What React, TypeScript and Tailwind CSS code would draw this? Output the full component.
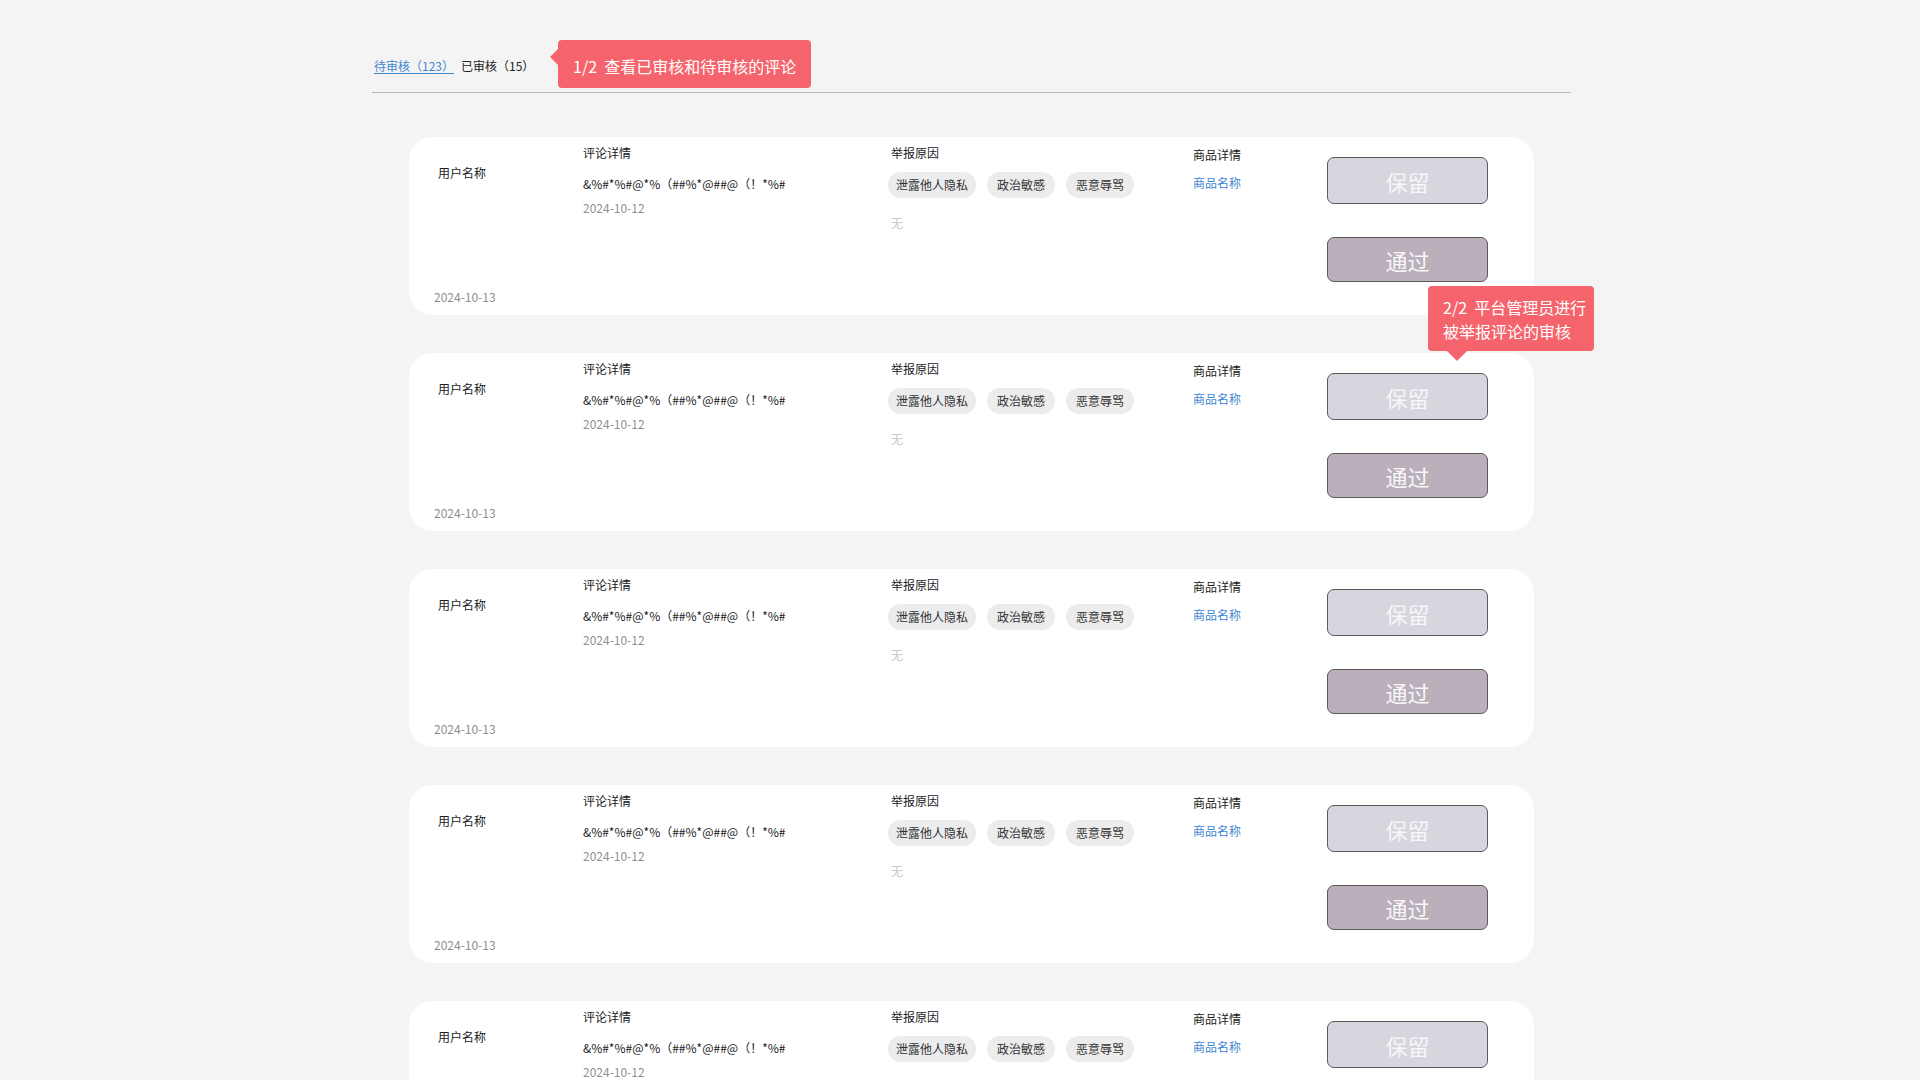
const reasons = ["泄露他人隐私", "政治敏感", "恶意辱骂"];

function ReportCard() {
  return (
    <div className="flex h-[178px] rounded-3xl bg-white text-[12px] leading-[18px] text-[#222]">
      <div className="flex w-[174px] flex-col pl-[25px] pb-[9px]">
        <div className="mt-[27px] pl-[4px]">用户名称</div>
        <div className="mt-auto text-[#8f8f8f]">2024-10-13</div>
      </div>
      <div className="flex w-[305px] flex-col pt-[7px]">
        <div>评论详情</div>
        <div className="mt-[13px]">&%#*%#@*%（##%*@##@（！*%#</div>
        <div className="mt-[6px] text-[#8f8f8f]">2024-10-12</div>
      </div>
      <div className="flex w-[305px] flex-col pt-[7px]">
        <div className="pl-[3px]">举报原因</div>
        <div className="mt-[10px] flex gap-[11px]">
          {reasons.map((r) => (
            <span
              key={r}
              className="flex h-[26px] min-w-[68px] items-center justify-center rounded-full bg-[#ececec] px-[8px] text-[#333]"
            >
              {r}
            </span>
          ))}
        </div>
        <div className="mt-[16px] pl-[3px] text-[#c8c8c8]">无</div>
      </div>
      <div className="flex w-[134px] flex-col pt-[9px]">
        <div>商品详情</div>
        <a className="mt-[10px] text-[#3f86d2]">商品名称</a>
      </div>
      <div className="flex w-[161px] flex-col pt-[20px]">
        <button className="h-[47px] rounded-[7px] border-[1.5px] border-[#5b5b5b] bg-[#d5d6de] text-[22px] leading-none text-[#f7f7f7]">
          保留
        </button>
        <button className="mt-[33px] h-[45px] rounded-[7px] border-[1.5px] border-[#5b5b5b] bg-[#bbafbb] text-[22px] leading-none text-[#f7f7f7]">
          通过
        </button>
      </div>
    </div>
  );
}

export default function App() {
  return (
    <div
      className="min-h-screen bg-[#f4f4f4] pb-[40px]"
      style={{ fontFamily: '"Noto Sans CJK SC", "Noto Sans", sans-serif' }}
    >
      <div className="relative ml-[372px] w-[1199px] pt-[57px]">
        <div className="relative flex h-[18px] items-center gap-[7px] pl-[2px] text-[12px] leading-[18px] text-[#222]">
          <a className="text-[#3f86d2] underline underline-offset-2">待审核（123）</a>
          <span>已审核（15）</span>
          <div className="absolute left-[186px] top-[-17px] flex h-[48px] items-center rounded-[4px] bg-[#f5646c] px-[15px] pt-[4px] text-[16px] text-white">
            <span className="absolute right-full top-[9px] h-0 w-0 border-y-[8px] border-r-[8px] border-y-transparent border-r-[#f5646c]" />
            1/2&nbsp;&nbsp;查看已审核和待审核的评论
          </div>
        </div>
        <div className="mt-[17px] h-px bg-[#b8b8b8]" />
        <div className="mt-[44px] flex flex-col gap-[38px] px-[37px]">
          {[0, 1, 2, 3, 4].map((i) => (
            <ReportCard key={i} />
          ))}
        </div>
        <div className="absolute left-[1056px] top-[286px] w-[166px] whitespace-nowrap rounded-[4px] bg-[#f5646c] pb-[8px] pl-[15px] pt-[9px] text-[16px] leading-[24px] text-white">
          2/2&nbsp;&nbsp;平台管理员进行
          <br />
          被举报评论的审核
          <span className="absolute left-[19px] top-full h-0 w-0 border-x-[10px] border-t-[10px] border-x-transparent border-t-[#f5646c]" />
        </div>
      </div>
    </div>
  );
}
